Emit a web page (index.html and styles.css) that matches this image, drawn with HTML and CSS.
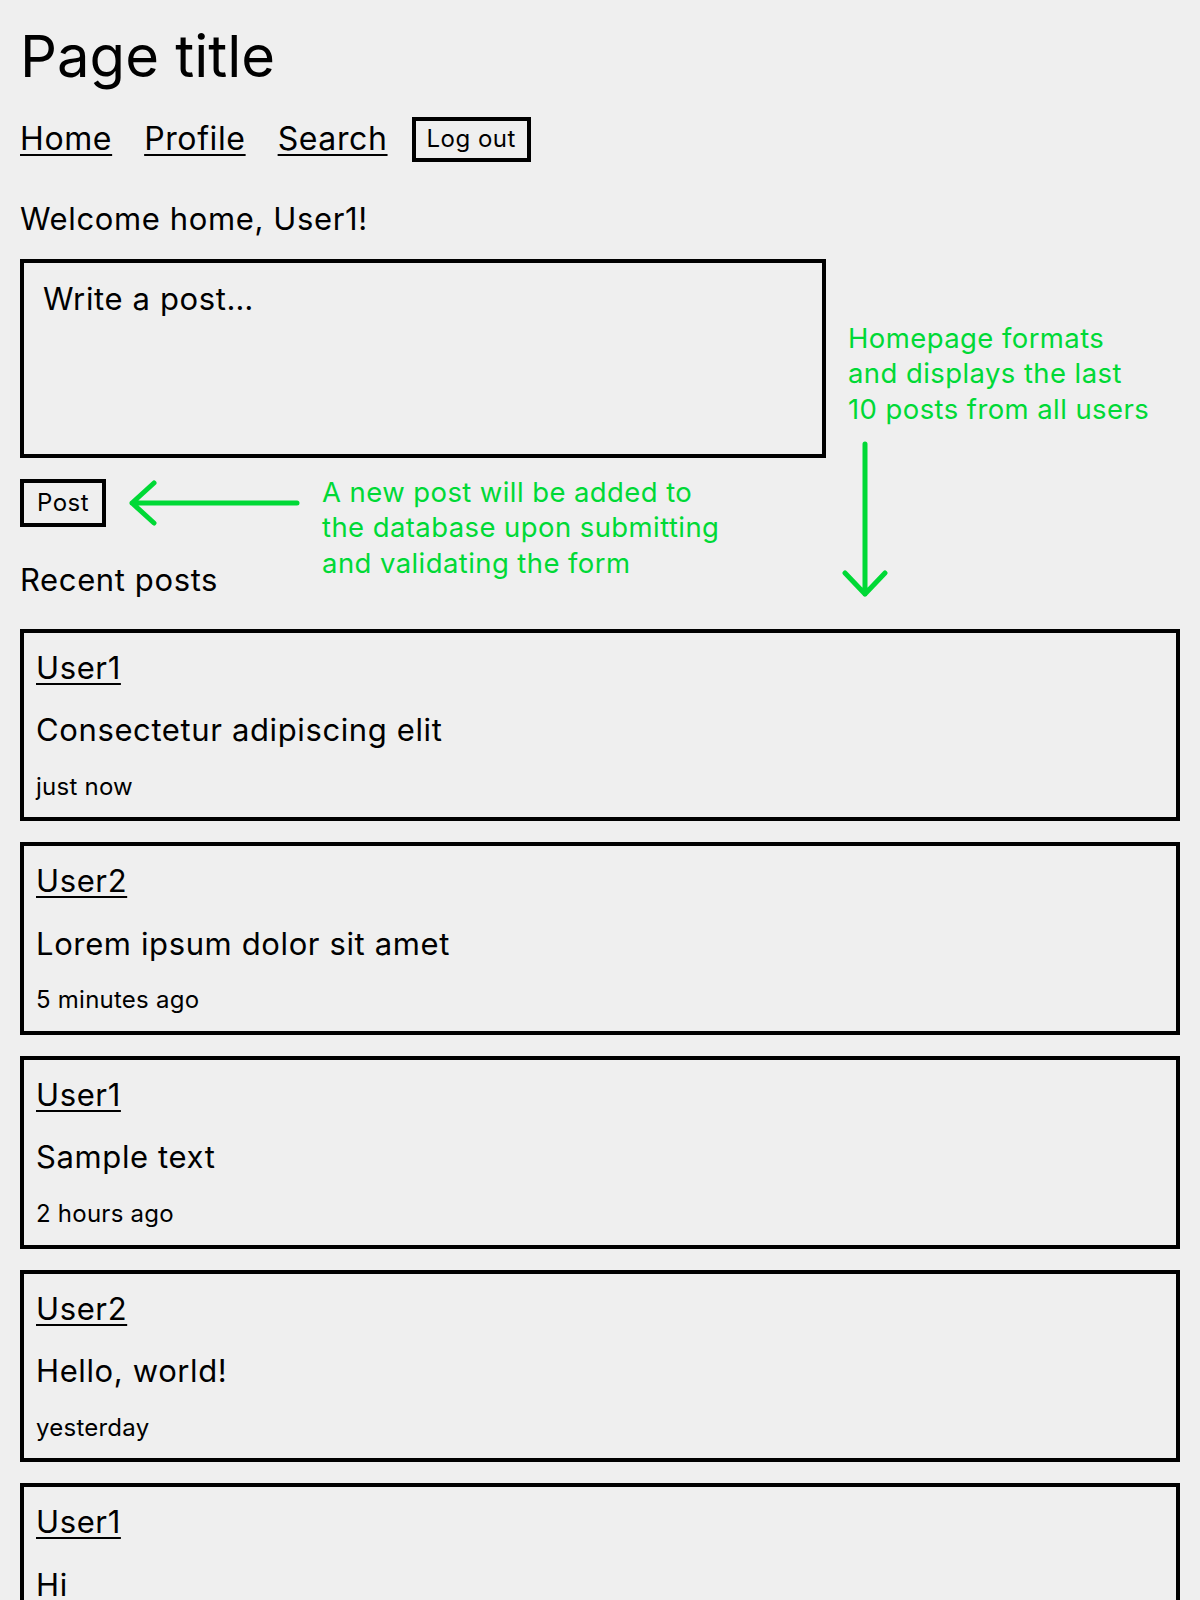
FILE: index.html
```html
<!DOCTYPE html>
<html lang="en">

<head>
  <meta charset="UTF-8">
  <meta name="viewport" content="width=device-width, initial-scale=1.0">
  <title>Home</title>
  <link rel="stylesheet" href="styles.css">
</head>

<body>
  <h1 class="page-title">Page title</h1>

  <nav class="main-nav">
    <a href="#">Home</a>
    <a href="#">Profile</a>
    <a href="#">Search</a>
    <form class="logout-form">
      <button type="button" class="btn btn-logout">Log out</button>
    </form>
  </nav>

  <p class="welcome">Welcome home, User1!</p>

  <div class="compose">
    <textarea class="compose-input" placeholder="Write a post…"></textarea>

    <div class="note note-side">
      <p>Homepage formats<br>and displays the last<br>10 posts from all users</p>
      <svg class="arrow-down" width="40" height="157" viewBox="0 0 40 157">
        <path d="M17 5 V155 M-3 134 L17 155 L37 134" />
      </svg>
    </div>

    <div class="submit-area">
      <button type="button" class="btn btn-post">Post</button>
      <svg class="arrow-left" width="174" height="50" viewBox="0 0 174 50">
        <path d="M170 25 H5 M27 5 L5 25 L27 45" />
      </svg>
      <p class="note note-inline">A new post will be added to<br>the database upon submitting<br>and validating the form</p>
      <h2 class="section-title">Recent posts</h2>
    </div>
  </div>

  <div class="post-list">
    <article class="post">
      <a class="post-author" href="#">User1</a>
      <p class="post-body">Consectetur adipiscing elit</p>
      <time class="post-time">just now</time>
    </article>
    <article class="post">
      <a class="post-author" href="#">User2</a>
      <p class="post-body">Lorem ipsum dolor sit amet</p>
      <time class="post-time">5 minutes ago</time>
    </article>
    <article class="post">
      <a class="post-author" href="#">User1</a>
      <p class="post-body">Sample text</p>
      <time class="post-time">2 hours ago</time>
    </article>
    <article class="post">
      <a class="post-author" href="#">User2</a>
      <p class="post-body">Hello, world!</p>
      <time class="post-time">yesterday</time>
    </article>
    <article class="post">
      <a class="post-author" href="#">User1</a>
      <p class="post-body">Hi</p>
      <time class="post-time">2 days ago</time>
    </article>
  </div>
</body>

</html>
```
FILE: styles.css
```css
  body {
    background-color: #efefef;
    color: #000;
    font-family: Inter, "Noto Sans", sans-serif;
    font-size: 31px;
    line-height: 1.2;
    letter-spacing: 0.02em;
    margin: 20px;
  }

  a {
    color: #000;
    text-decoration: underline;
    text-decoration-thickness: 2px;
    text-underline-offset: 4px;
  }

  p {
    margin: 0;
  }

  .page-title {
    font-size: 58px;
    font-weight: normal;
    letter-spacing: 0;
    margin: 2px 0 0;
  }

  .main-nav {
    display: flex;
    align-items: center;
    gap: 32px;
    margin-top: 25px;
    font-size: 32px;
  }

  .logout-form {
    margin: 0 0 0 -8px;
  }

  .btn {
    font: inherit;
    font-size: 24px;
    line-height: 1.2;
    letter-spacing: 0.02em;
    color: #000;
    background: transparent;
    border: 4px solid #000;
    border-radius: 0;
    cursor: pointer;
  }

  .btn-logout {
    display: block;
    padding: 4.5px 11px;
  }

  .welcome {
    margin-top: 38px;
  }

  .compose {
    display: grid;
    grid-template-columns: 806px 1fr;
    align-items: start;
    margin-top: 21px;
  }

  .compose-input {
    display: block;
    grid-column: 1;
    grid-row: 1;
    width: 806px;
    height: 199px;
    box-sizing: border-box;
    padding: 17px 19px 18px;
    border: 4px solid #000;
    background: transparent;
    font: inherit;
    letter-spacing: 0.02em;
    color: #000;
    resize: none;
    outline: none;
  }

  .compose-input::placeholder {
    color: #000;
    opacity: 1;
  }

  .note {
    color: #00d936;
    font-size: 27.5px;
    line-height: 35.5px;
    letter-spacing: 0.015em;
  }

  .note-side {
    grid-column: 2;
    grid-row: 1 / span 2;
    margin-top: 62px;
    padding-left: 22px;
  }

  .arrow-down,
  .arrow-left {
    display: block;
    overflow: visible;
    fill: none;
    stroke: #00d936;
    stroke-width: 5;
    stroke-linecap: round;
    stroke-linejoin: round;
  }

  .arrow-down {
    margin-top: 12px;
  }

  .submit-area {
    grid-column: 1;
    grid-row: 2;
    display: grid;
    grid-template-columns: auto auto 1fr;
    column-gap: 21px;
    align-items: start;
    margin-top: 17px;
  }

  .btn-post {
    grid-column: 1;
    grid-row: 1;
    justify-self: start;
    margin-top: 4px;
    padding: 6px 13px;
  }

  .arrow-left {
    grid-column: 2;
    grid-row: 1;
    margin-top: 3px;
  }

  .note-inline {
    grid-column: 3;
    grid-row: 1 / span 2;
    white-space: nowrap;
  }

  .section-title {
    grid-column: 1 / 3;
    grid-row: 2;
    font-size: 31px;
    font-weight: normal;
    margin: 33px 0 0;
  }

  .post-list {
    margin-top: 31px;
  }

  .post {
    border: 4px solid #000;
    padding: 16px 12px 16px;
    margin-bottom: 21px;
  }

  .post-author {
    display: inline-block;
  }

  .post-body {
    margin-top: 25px;
  }

  .post-time {
    display: block;
    font-size: 24px;
    letter-spacing: 0.01em;
    margin-top: 24.5px;
  }
```
